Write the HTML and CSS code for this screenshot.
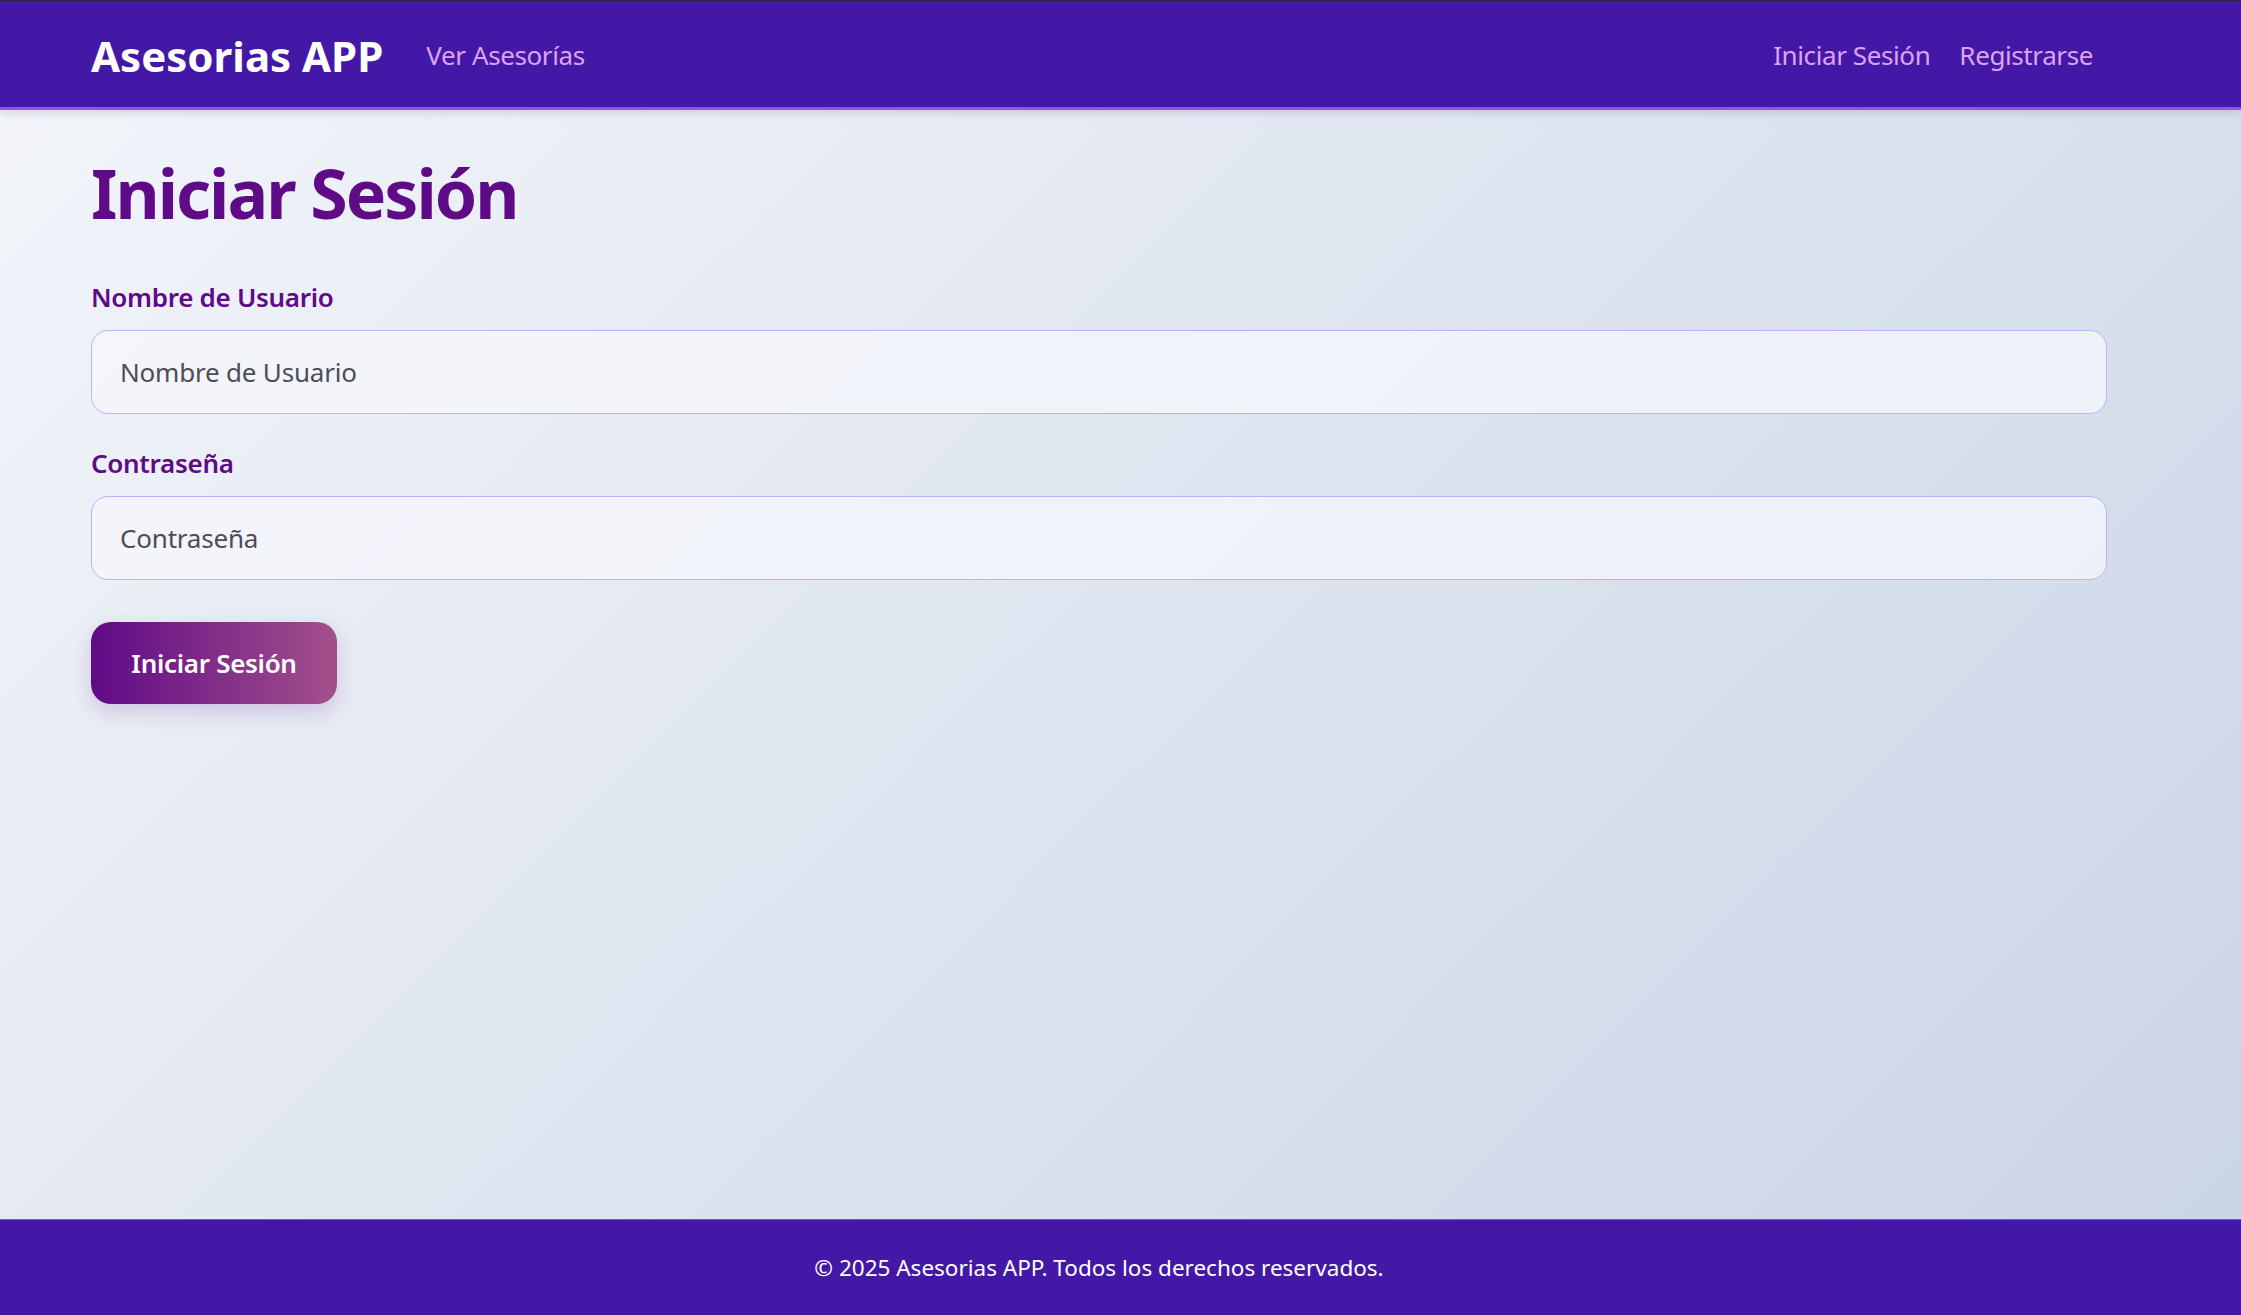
FILE: index.html
```html
<!DOCTYPE html>
<html lang="es">
<head>
<meta charset="utf-8">
<title>Iniciar Sesión - Asesorias APP</title>
<link rel="stylesheet" href="styles.css">
</head>
<body>
<header class="site-header">
  <div class="header-inner">
    <div class="header-left">
      <a class="brand" href="#">Asesorias APP</a>
      <a class="nav-link" href="#">Ver Asesorías</a>
    </div>
    <nav class="header-right">
      <a class="nav-link" href="#">Iniciar Sesión</a>
      <a class="nav-link" href="#">Registrarse</a>
    </nav>
  </div>
</header>
<main class="main">
  <h1 class="page-title">Iniciar Sesión</h1>
  <form class="login-form">
    <div class="field">
      <label class="field-label" for="username">Nombre de Usuario</label>
      <input class="field-input" id="username" type="text" placeholder="Nombre de Usuario">
    </div>
    <div class="field">
      <label class="field-label" for="password">Contraseña</label>
      <input class="field-input" id="password" type="password" placeholder="Contraseña">
    </div>
    <button class="submit-btn" type="button">Iniciar Sesión</button>
  </form>
</main>
<footer class="site-footer">
  <div class="footer-inner">
    <p class="footer-text">© 2025 Asesorias APP. Todos los derechos reservados.</p>
  </div>
</footer>
</body>
</html>
```
FILE: styles.css
```css
* { box-sizing: border-box; }

html, body { height: 100%; }

body {
  margin: 0;
  min-height: 100vh;
  display: flex;
  flex-direction: column;
  font-family: "Noto Sans", "Open Sans", sans-serif;
  background: linear-gradient(135deg, #f3f5fa 0%, #c9d4e5 100%);
}

.site-header {
  background: #4318a6;
  border-top: 1px solid #2c2a3c;
  border-bottom: 3px solid #9d4edd;
  box-shadow: 0 3px 8px rgba(40, 30, 80, 0.15);
}

.header-inner {
  height: 106px;
  width: 2016px;
  margin-left: 91px;
  padding-top: 2px;
  display: flex;
  align-items: center;
  justify-content: space-between;
}

.header-left, .header-right {
  display: flex;
  align-items: center;
}

.brand {
  color: #ffffff;
  font-weight: 700;
  font-size: 42px;
  text-decoration: none;
  margin-right: 43px;
}

.nav-link {
  color: #dda3f2;
  font-size: 26px;
  text-decoration: none;
  letter-spacing: -0.4px;
}

.header-right {
  gap: 29px;
  padding-right: 14px;
}

.main {
  flex: 1;
  padding: 0 0 0 91px;
  width: 2107px;
}

.page-title {
  margin: 42px 0 48px;
  font-size: 68px;
  line-height: 1.2;
  font-weight: 700;
  color: #5f0a87;
  letter-spacing: -2px;
}

.login-form {
  display: flex;
  flex-direction: column;
  align-items: flex-start;
}

.field {
  width: 100%;
  margin-bottom: 34px;
}

.field-label {
  display: block;
  color: #5f0a87;
  font-size: 26px;
  font-weight: 600;
  margin-bottom: 17px;
  line-height: 1.2;
  letter-spacing: -0.3px;
}

.field-input {
  display: block;
  width: 100%;
  height: 84px;
  padding: 0 28px;
  border: 1.5px solid #bdb2fb;
  border-radius: 17px;
  background: rgba(245, 247, 252, 0.75);
  font-family: inherit;
  font-size: 26px;
  color: #333;
  outline: none;
}

.field-input::placeholder {
  color: #4d4d57;
  letter-spacing: -0.2px;
}

.submit-btn {
  margin-top: 8px;
  height: 82px;
  width: 246px;
  border: none;
  border-radius: 20px;
  background: linear-gradient(90deg, #5f0a87 0%, #a4508b 100%);
  color: #ffffff;
  font-family: inherit;
  font-size: 26px;
  font-weight: 600;
  letter-spacing: -0.3px;
  box-shadow: 0 8px 22px rgba(95, 10, 135, 0.18);
  cursor: pointer;
}

.site-footer {
  background: #4318a6;
  border-top: 1px solid #6c6a8a;
  height: 96px;
}

.footer-inner {
  width: 2016px;
  margin-left: 91px;
  height: 100%;
  display: flex;
  align-items: center;
  justify-content: center;
}

.footer-text {
  margin: 0;
  color: #ffffff;
  font-size: 22.5px;
}
```
